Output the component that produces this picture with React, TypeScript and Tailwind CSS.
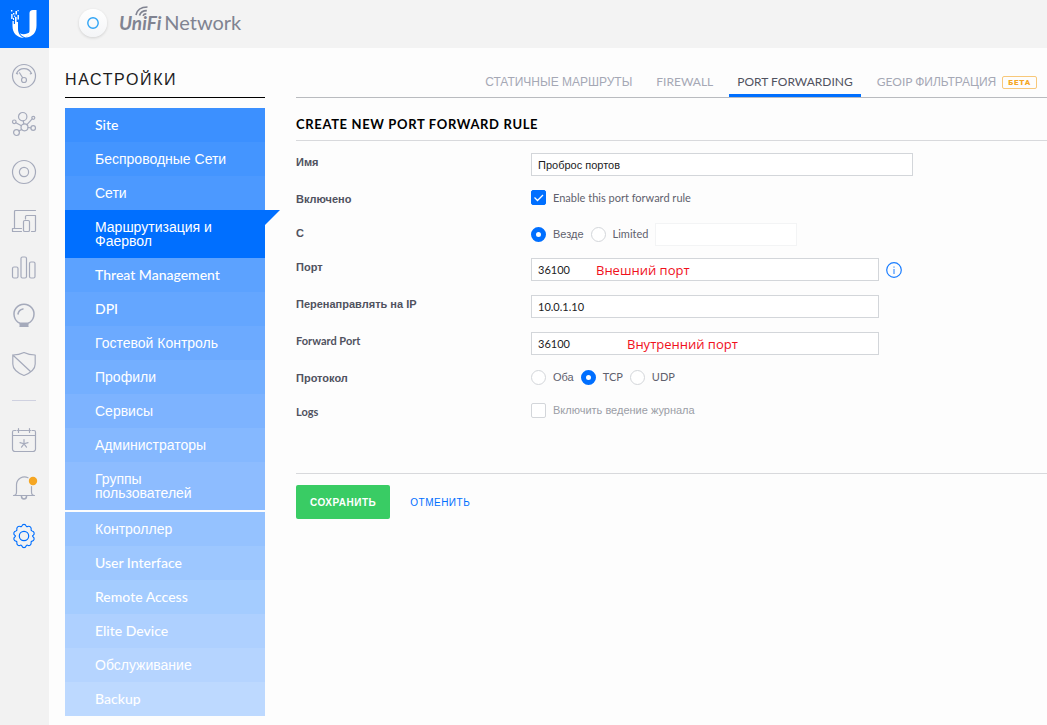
import { ReactNode } from "react";

const LATIN = "font-['Lato','Liberation_Sans',sans-serif]";
const CYR = "font-['Liberation_Sans',sans-serif]";

function font(text: string) {
  return /[А-Яа-яЁё]/.test(text) ? CYR : LATIN;
}

/* ---------- Icons ---------- */

function Icon({ children, active = false }: { children: ReactNode; active?: boolean }) {
  return (
    <svg
      viewBox="0 0 24 24"
      className={`size-6 overflow-visible ${active ? "text-[#006fff]" : "text-[#a5aabb]"}`}
      fill="none"
      stroke="currentColor"
      strokeWidth="1.2"
      strokeLinecap="round"
      strokeLinejoin="round"
      aria-hidden="true"
    >
      {children}
    </svg>
  );
}

const navIcons = [
  {
    label: "Dashboard",
    art: (
      <>
        <circle cx="12" cy="12" r="11.5" />
        <path d="M4.5 9.5a8.2 8.2 0 0 1 15 0M7.5 8.8l3 4.7" />
        <path d="M4.5 9.5l1.2.4M19.5 9.5l-1.2.4" />
        <circle cx="12" cy="16" r="2.5" />
      </>
    ),
  },
  {
    label: "Topology",
    art: (
      <>
        <circle cx="10.7" cy="4.7" r="4.2" />
        <circle cx="12.5" cy="15.3" r="3.5" />
        <circle cx="2.3" cy="9.8" r="1.8" />
        <circle cx="21.3" cy="5.8" r="1.5" />
        <circle cx="21.2" cy="16" r="2.3" />
        <circle cx="4.5" cy="20.6" r="2.9" />
        <path d="M11.3 8.9l.5 2.9M3.9 10.7l5.5 3M20.2 6.9l-5.3 5.8M16 15.5l2.9.3M9.8 17.5l-3 1.4" />
      </>
    ),
  },
  {
    label: "Devices",
    art: (
      <>
        <circle cx="12" cy="12" r="11.5" />
        <circle cx="12" cy="12" r="4.6" />
      </>
    ),
  },
  {
    label: "Clients",
    art: (
      <>
        <path d="M2.500 20V3.500a1 1 0 0 1 1-1h20M.5 20.500h9M.5 20.500v3h9" />
        <path d="M13.500 11V8.500a1 1 0 0 1 1-1h9M19.500 23.500h3a1 1 0 0 0 1-1v-15" />
        <rect x="11.500" y="12.500" width="6" height="11" rx="1.300" />
      </>
    ),
  },
  {
    label: "Statistics",
    art: (
      <>
        <rect x=".5" y="11" width="5.500" height="11" rx="1.500" />
        <rect x="9" y="1" width="5.500" height="21" rx="1.500" />
        <rect x="17.500" y="6" width="5.500" height="16" rx="1.500" />
      </>
    ),
  },
  {
    label: "Insights",
    art: (
      <>
        <path d="M8 19.300a10 10 0 1 1 8 0z" strokeWidth="1.5" />
        <path d="M6 10a6.200 6.200 0 0 1 5-5M8 22.300h8M8 20.700h8" strokeWidth="1.500" />
      </>
    ),
  },
  {
    label: "Threats",
    art: (
      <>
        <path d="M.8 3C5 3 9 2 12 .5 15 2 19 3 23.200 3v9c0 5.500-5 9-11.200 11.500C5.800 21 .8 17.500.8 12zM.8 3l17.200 16" />
      </>
    ),
  },
];

const lowerIcons = [
  {
    label: "Events",
    art: (
      <>
        <path d="M4 2.500H2a1.500 1.500 0 0 0-1.500 1.500v17A2.500 2.500 0 0 0 3 23.500h18a2.500 2.500 0 0 0 2.500-2.500V4A1.500 1.500 0 0 0 22 2.500h-2M8.500 2.500h7M.5 7.500h23" />
        <path d="M6.500.5v4M17.500.5v4M5.500 2.500h2M16.500 2.500h2" />
        <path d="M12 11.500v4.300M12 15.800l-4-1.200M12 15.800l4-1.200M12 15.800l-2.500 3.400M12 15.800l2.500 3.400" />
      </>
    ),
  },
  {
    label: "Alerts",
    art: (
      <>
        <path d="M16 1.700A8 8 0 0 0 4.500 8.500V16c0 1.800-1 3.500-3 3.500h21c-2 0-3-1.700-3-3.500v-5.500" />
        <path d="M9.500 20.500c.3 3.300 4.700 3.300 5 0" strokeWidth="1.600" />
        <circle cx="21" cy="5" r="4.200" fill="#f5a623" stroke="none" />
      </>
    ),
  },
];

function GearArt() {
  return (
    <>
      <path d="M9.8 2.200c.7-2.200 3.700-2.200 4.400 0 .3.800 1 1 1.700.7 2-1.100 4.200.9 3.600 3-.2.900.2 1.500 1 1.700 2.400.5 3 3.300 1.200 4.400-.9.500-.9 1.400 0 1.900 1.800 1.200 1 3.900-1.200 4.300-.8.200-1.200.8-1 1.600.4 2.100-1.700 3.900-3.600 2.900-.7-.4-1.400-.1-1.700.7-.7 2.200-3.700 2.200-4.400 0-.3-.8-1-1.100-1.700-.7-1.900 1-4-.8-3.600-2.900.2-.8-.2-1.400-1-1.600-2.200-.4-3-3.100-1.200-4.300.9-.5.900-1.400 0-1.900C.5 10.900 1.100 8.100 3.500 7.600c.8-.2 1.200-.8 1-1.700-.6-2.100 1.600-4.100 3.600-3 .7.300 1.400.1 1.700-.7z" transform="translate(.6 -.2) scale(.95)" />
      <circle cx="12" cy="12" r="4.700" />
    </>
  );
}

function UbiquitiMark() {
  return (
    <svg viewBox="0 0 28 30" className="h-[30px] w-7" fill="#fff" aria-hidden="true">
      <path d="M26.500 1v15.500c0 7-3.800 11.500-11 12 3.300-2 4-4 4-8V4c0-2 1.500-3 3.500-3z" />
      <path d="M8 13v7c0 4.500 2.500 7.700 6.500 9C6.500 28.500 2.500 24 2.500 17v-5h1.300v3h1.200V8h1.600v5z" />
      <path d="M20.500 22.500c-1 3.300-2.800 5-5 6-2.500-.6-4.500-2-5.700-4.200 3 1.700 7.300 1.200 10.700-1.800z" />
      <path d="M1 1h1.400v1.400H1zM3 4h1.400v1.400H3zM5.500 2h1.500v3.500H5.500zM1.200 5h1.400v5H1.200zM7.500 1h1.200v1.200H7.500zM7.500 6h1.400v4.500H7.500zM4.200 6.500h1v1.500h-1zM3 9h1v2H3z" />
    </svg>
  );
}

/* ---------- Settings menu ---------- */

type Item = { text: string; bg: string; active?: boolean };

const menu: Item[] = [
  { text: "Site", bg: "bg-[#3c90ff]" },
  { text: "Беспроводные Сети", bg: "bg-[#4495ff]" },
  { text: "Сети", bg: "bg-[#4c99ff]" },
  { text: "Маршрутизация и Фаервол", bg: "bg-[#006fff]", active: true },
  { text: "Threat Management", bg: "bg-[#5ca2ff]" },
  { text: "DPI", bg: "bg-[#64a6ff]" },
  { text: "Гостевой Контроль", bg: "bg-[#6caaff]" },
  { text: "Профили", bg: "bg-[#74afff]" },
  { text: "Сервисы", bg: "bg-[#7db3ff]" },
  { text: "Администраторы", bg: "bg-[#85b8ff]" },
  { text: "Группы пользователей", bg: "bg-[#8dbcff]" },
];

const systemMenu: Item[] = [
  { text: "Контроллер", bg: "bg-[#95c2ff]" },
  { text: "User Interface", bg: "bg-[#9dc7ff]" },
  { text: "Remote Access", bg: "bg-[#a4ccff]" },
  { text: "Elite Device", bg: "bg-[#aed0ff]" },
  { text: "Обслуживание", bg: "bg-[#b5d4ff]" },
  { text: "Backup", bg: "bg-[#bdd9ff]" },
];

function MenuList({ items }: { items: Item[] }) {
  return (
    <ul>
      {items.map((it) => (
        <li key={it.text} className={`relative ${it.bg}`}>
          <a
            href="#"
            aria-current={it.active ? "page" : undefined}
            className={`block py-2.5 pr-8 pl-[30px] text-sm leading-[14px] font-medium text-white ${font(it.text)}`}
          >
            {it.text}
          </a>
          {it.active && (
            <svg viewBox="0 0 15 15" className="absolute top-0 left-full size-[15px]" fill="#006fff" aria-hidden="true">
              <path d="M0 0h15L0 15z" />
            </svg>
          )}
        </li>
      ))}
    </ul>
  );
}

/* ---------- Form pieces ---------- */

function Row({ label, htmlFor, children, tall = false }: { label: string; htmlFor?: string; children: ReactNode; tall?: boolean }) {
  const cls = `w-[235px] shrink-0 pt-px text-[11px] leading-4 font-bold text-[#50525f] ${font(label)}`;
  return (
    <div className={`mb-3.5 flex items-start ${tall ? "h-[23px]" : "h-5"}`}>
      {htmlFor ? (
        <label htmlFor={htmlFor} className={cls}>
          {label}
        </label>
      ) : (
        <span className={cls}>{label}</span>
      )}
      {children}
    </div>
  );
}

const inputCls =
  "h-[23px] border border-[#d3d6da] bg-white px-1.5 text-[11px] text-[#1c1c1e] outline-none";

function Radio({ name, label, checked = false }: { name: string; label: string; checked?: boolean }) {
  return (
    <label className={`flex items-center gap-[7px] text-[11px] leading-4 text-[#5f616d] ${font(label)}`}>
      <input
        type="radio"
        name={name}
        defaultChecked={checked}
        className="size-[15px] appearance-none rounded-full border border-[#d3d6da] bg-white checked:border-5 checked:border-[#006fff]"
      />
      {label}
    </label>
  );
}

function Check({ label, checked = false, muted = false }: { label: string; checked?: boolean; muted?: boolean }) {
  return (
    <label
      className={`flex items-center gap-[7px] text-[11px] leading-[15px] ${muted ? "text-[#9b9da6]" : "text-[#5f616d]"} ${font(label)}`}
    >
      <span className="relative flex size-[15px]">
        <input
          type="checkbox"
          defaultChecked={checked}
          className="peer size-[15px] appearance-none rounded-[2px] border border-[#d3d6da] bg-white checked:border-[#006fff] checked:bg-[#006fff]"
        />
        <svg
          viewBox="0 0 15 15"
          className="pointer-events-none absolute inset-0 hidden size-[15px] peer-checked:block"
          fill="none"
          stroke="#fff"
          strokeWidth="1.3"
          aria-hidden="true"
        >
          <path d="M3.500 7.500l3 3 5.500-5.500" />
        </svg>
      </span>
      {label}
    </label>
  );
}

/* ---------- Page ---------- */

export default function App() {
  return (
    <div className="flex min-h-screen bg-[#fdfdfd] font-['Lato','Liberation_Sans',sans-serif] text-black">
      <nav aria-label="Main" className="flex w-[49px] shrink-0 flex-col bg-[#f2f2f2]">
        <a href="#" aria-label="Home" className="flex h-12 items-center bg-[#006fff] pl-2.5">
          <UbiquitiMark />
        </a>
        <div className="flex w-12 flex-col pt-1">
          {navIcons.map((n) => (
            <a key={n.label} href="#" aria-label={n.label} className="flex h-12 items-center justify-center">
              <Icon>{n.art}</Icon>
            </a>
          ))}
          <div className="flex h-7 justify-center pt-3">
            <span className="h-px w-6 bg-[#cfd1e0]" />
          </div>
          {lowerIcons.map((n) => (
            <a key={n.label} href="#" aria-label={n.label} className="flex h-12 items-center justify-center">
              <Icon>{n.art}</Icon>
            </a>
          ))}
          <a href="#" aria-label="Settings" className="flex h-12 items-center justify-center">
            <Icon active>
              <GearArt />
            </Icon>
          </a>
        </div>
      </nav>

      <div className="flex min-w-0 grow flex-col">
        <header className="flex h-12 items-center bg-[#f3f3f3] pb-[3px] pl-[30px] text-[#808391]">
          <span className="flex size-7 items-center justify-center rounded-full bg-linear-to-b from-white to-[#f4f5f7] shadow-[0_1px_3px_rgba(0,0,0,0.15)]">
            <svg viewBox="0 0 12 12" className="size-3" fill="none" stroke="#2fa4f5" strokeWidth="1.4" aria-hidden="true">
              <circle cx="6" cy="6" r="5.200" />
            </svg>
          </span>
          <div className="relative flex items-baseline gap-[3px] pl-3 text-xl leading-6">
            <span className="text-[19px] font-bold italic">UniFi</span>
            <span>Network</span>
            <svg
              viewBox="0 0 14 10"
              className="absolute -top-1 left-7 h-2.5 w-3.5"
              fill="none"
              stroke="currentColor"
              strokeWidth="1.700"
              aria-hidden="true"
            >
              <path d="M1 9C2 4 6 1 12.500 1M4.500 9.500C5.500 6.500 8 4.700 11.800 4.700M8 9.800c.6-1.300 1.700-2 3.300-2" />
            </svg>
          </div>
        </header>

        <div className="flex grow pl-4">
          <aside className="w-[200px] shrink-0 pb-2">
            <h1 className="mb-2.5 flex h-[50px] items-center border-b border-black pt-3.5 font-['Liberation_Sans',sans-serif] text-base leading-5 tracking-widest text-[#1c1c1e]">
              НАСТРОЙКИ
            </h1>
            <nav aria-label="Настройки" className="flex flex-col gap-0.5">
              <MenuList items={menu} />
              <MenuList items={systemMenu} />
            </nav>
          </aside>

          <main className="ml-[31px] min-w-0 grow">
            <div className="flex h-[50px] items-end justify-end gap-2 border-b border-[#b9bbbf] pr-0.5 text-xs leading-4 text-[#a5a8b5]">
              <a href="#" className={`border-b-3 border-transparent px-2 pb-1 ${CYR}`}>
                СТАТИЧНЫЕ МАРШРУТЫ
              </a>
              <a href="#" className="border-b-3 border-transparent px-2 pb-1">
                FIREWALL
              </a>
              <a href="#" aria-current="page" className="border-b-3 border-[#006fff] px-2 pb-1 text-[#50525f]">
                PORT FORWARDING
              </a>
              <a href="#" className="flex items-center gap-1.5 border-b-3 border-transparent px-2 pb-1">
                <span>
                  GEOIP <span className={CYR}>ФИЛЬТРАЦИЯ</span>
                </span>
                <span className="rounded-[2px] border border-[#f8c879] px-[5px] font-['Roboto','Liberation_Sans',sans-serif] text-[8px] leading-[11px] font-black tracking-widest text-[#f5a623]">
                  БЕТА
                </span>
              </a>
            </div>

            <h2 className="mb-3 border-b border-[#d8d9dc] pt-4 pb-1.5 text-[13px] leading-5 font-bold tracking-wider">
              CREATE NEW PORT FORWARD RULE
            </h2>

            <form onSubmit={(e) => e.preventDefault()}>
              <Row label="Имя" htmlFor="name" tall>
                <input id="name" defaultValue="Проброс портов" className={`w-[382px] ${inputCls} ${CYR}`} />
              </Row>
              <Row label="Включено">
                <Check label="Enable this port forward rule" checked />
              </Row>
              <Row label="С">
                <div className="flex h-5 items-center gap-[7px]">
                  <Radio name="from" label="Везде" checked />
                  <Radio name="from" label="Limited" />
                  <input
                    aria-label="Limited"
                    disabled
                    className="h-[23px] w-[142px] border border-[#f3f4f5] bg-white px-1.5 text-[11px]"
                  />
                </div>
              </Row>
              <Row label="Порт" htmlFor="port" tall>
                <div className="relative flex items-center gap-[7px]">
                  <input id="port" defaultValue="36100" className={`w-[348px] ${inputCls} ${LATIN}`} />
                  <span className="pointer-events-none absolute top-0.5 left-[65px] font-['Open_Sans','Noto_Sans',sans-serif] text-[13px] leading-5 text-[#f0101c]">
                    Внешний порт
                  </span>
                  <svg viewBox="0 0 16 16" className="size-4" fill="none" stroke="#1a7dff" aria-hidden="true">
                    <circle cx="8" cy="8" r="7.300" strokeWidth="1.200" />
                    <path d="M8 7v5M8 4.500v1.200" />
                  </svg>
                </div>
              </Row>
              <Row label="Перенаправлять на IP" htmlFor="ip" tall>
                <input id="ip" defaultValue="10.0.1.10" className={`w-[348px] ${inputCls} ${LATIN}`} />
              </Row>
              <Row label="Forward Port" htmlFor="fwd" tall>
                <div className="relative flex">
                  <input id="fwd" defaultValue="36100" className={`w-[348px] ${inputCls} ${LATIN}`} />
                  <span className="pointer-events-none absolute top-0.5 left-24 font-['Open_Sans','Noto_Sans',sans-serif] text-[13px] leading-5 text-[#f0101c]">
                    Внутренний порт
                  </span>
                </div>
              </Row>
              <Row label="Протокол">
                <div className="flex items-center gap-[7px]">
                  <Radio name="protocol" label="Оба" />
                  <Radio name="protocol" label="TCP" checked />
                  <Radio name="protocol" label="UDP" />
                </div>
              </Row>
              <Row label="Logs">
                <Check label="Включить ведение журнала" muted />
              </Row>

              <div className="mt-[50px] flex items-center gap-5 border-t border-[#d8d9dc] pt-[11px] font-['Liberation_Sans',sans-serif] text-[10px] tracking-wider">
                <button type="submit" className="h-[34px] rounded-[2px] bg-[#39cc64] px-3.5 font-bold text-white">
                  СОХРАНИТЬ
                </button>
                <button type="button" className="h-[34px] text-[#006fff]">
                  ОТМЕНИТЬ
                </button>
              </div>
            </form>
          </main>
        </div>
      </div>
    </div>
  );
}
